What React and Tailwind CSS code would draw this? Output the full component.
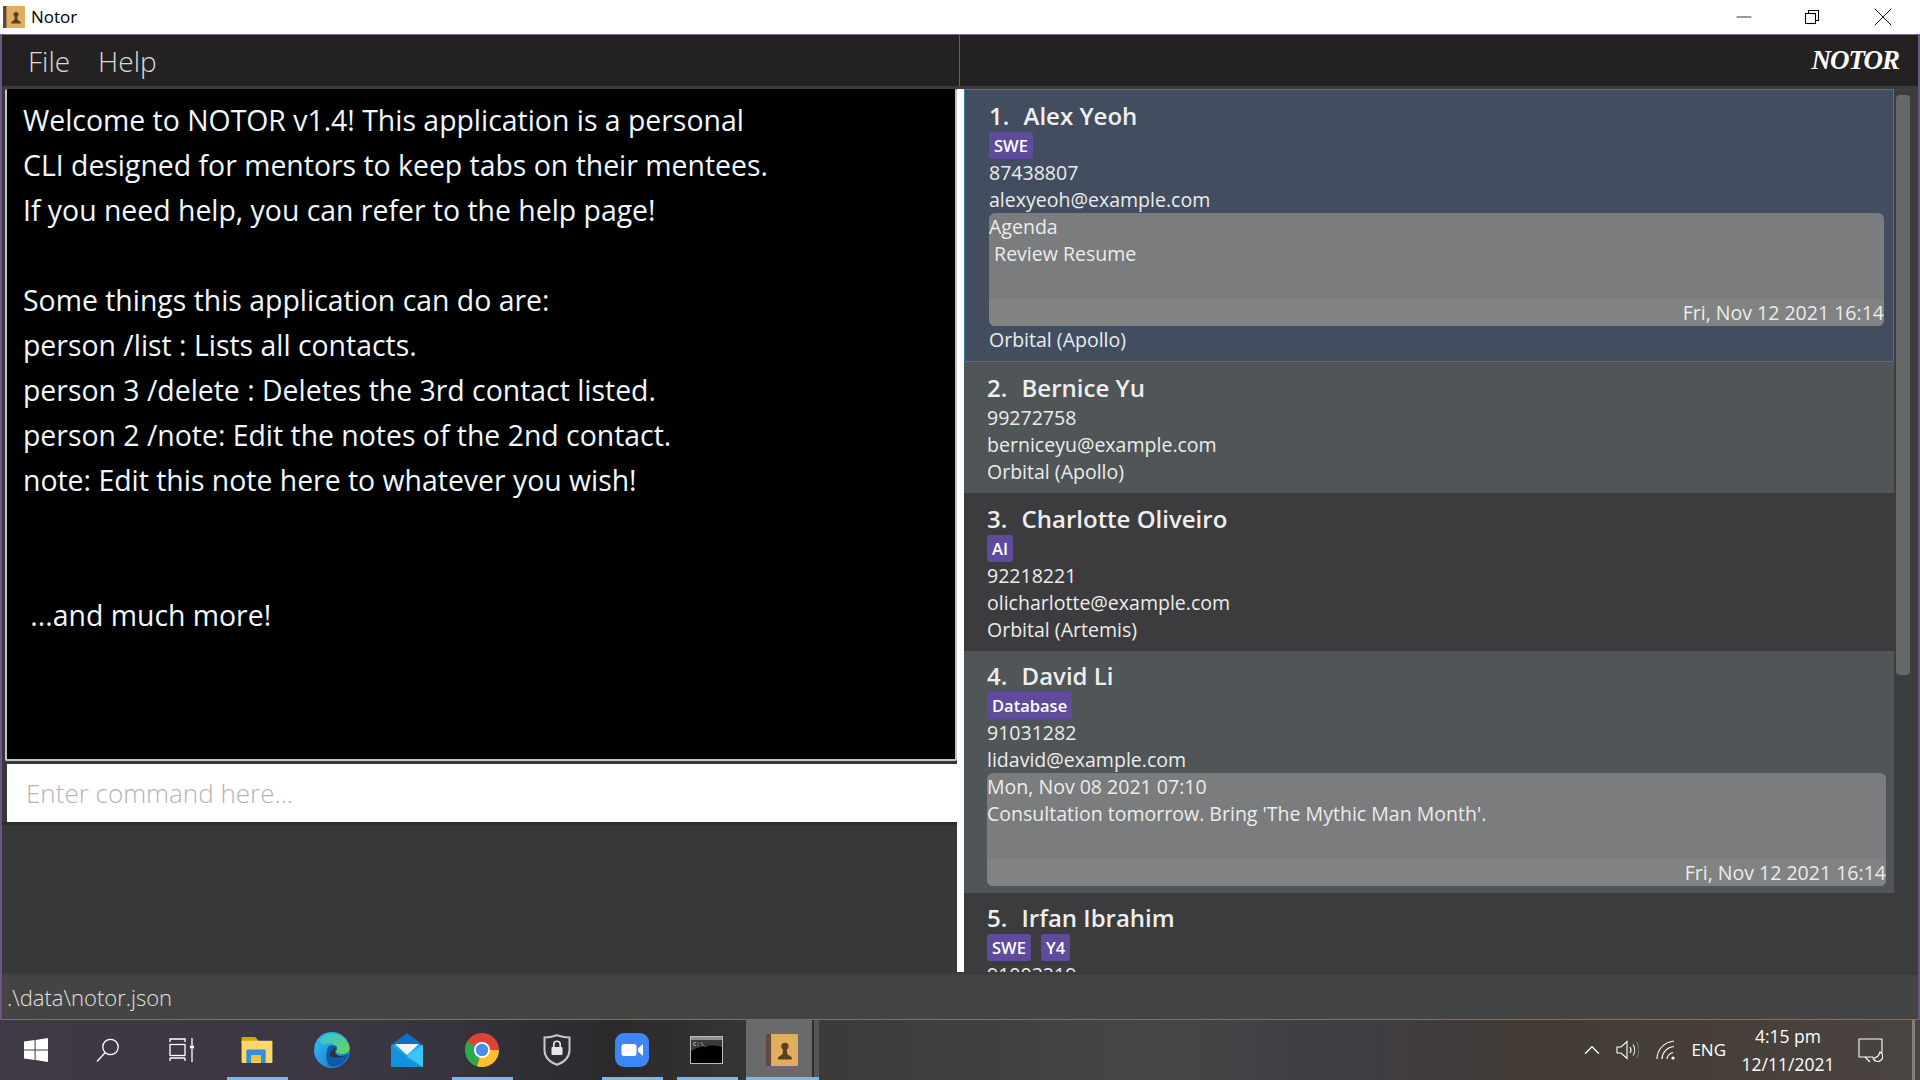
import React from "react";
import { Minus, X, ChevronUp } from "lucide-react";

const FONT = "font-['Open_Sans',sans-serif]";

// ─── Data ─────────────────────────────────────────────────────────────────────
const welcomeLines = [
  "Welcome to NOTOR v1.4! This application is a personal",
  "CLI designed for mentors to keep tabs on their mentees.",
  "If you need help, you can refer to the help page!",
  "\u00a0",
  "Some things this application can do are:",
  "person /list : Lists all contacts.",
  "person 3 /delete : Deletes the 3rd contact listed.",
  "person 2 /note: Edit the notes of the 2nd contact.",
  "note: Edit this note here to whatever you wish!",
  "\u00a0",
  "\u00a0",
  "\u00a0...and much more!",
];

// ─── Small pieces ─────────────────────────────────────────────────────────────
const Tag = ({ children }) => (
  <span className="flex h-[27px] items-center rounded-[3px] bg-[#5f4a9c] px-[5px] pt-[1px] text-[16.5px] font-semibold text-white">
    {children}
  </span>
);

const Name = ({ num, children }) => (
  <div className="h-[27px] whitespace-pre text-[24px] font-semibold leading-[25px] text-[#eeeeee]">
    {num}.&nbsp;<span className="ml-[8px]">{children}</span>
  </div>
);

const Row = ({ children }) => (
  <div className="h-[27px] whitespace-pre text-[19.55px] leading-[27px] text-[#ececec]">{children}</div>
);

const NoteBox = ({ title, body }) => (
  <div className="flex h-[113px] flex-col overflow-hidden rounded-[6px] bg-[#7b7c7d]">
    <div className="h-[86px]">
      <Row>{title}</Row>
      <Row>{body}</Row>
    </div>
    <div className="flex h-[27px] justify-end bg-[#818282]">
      <Row>Fri, Nov 12 2021 16:14</Row>
    </div>
  </div>
);

const NotorBook = ({ size = 22 }) => (
  <svg width={size} height={size} viewBox="0 0 22 22">
    <rect x="0" y="0" width="22" height="22" rx="1" fill="#e2ad5f" />
    <rect x="0" y="0" width="3.5" height="22" fill="#5e4a3e" />
    <circle cx="13" cy="8.5" r="2.5" fill="#5a3f20" />
    <path d="M11.8 10.5h2.4l.5 3.5 3 2v1.5H8.300V16l3-2z" fill="#5a3f20" />
  </svg>
);

// ─── Taskbar icons ────────────────────────────────────────────────────────────
const WindowsIcon = () => (
  <svg width="24" height="24" viewBox="0 0 24 24" fill="#fff">
    <path d="M0 3.6 10.6 2v9.5H0zM11.6 1.9 24 0v11.5H11.6zM0 12.5h10.6V22L0 20.4zM11.6 12.5H24V24l-12.4-1.9z" />
  </svg>
);

const SearchIcon = () => (
  <svg width="24" height="24" viewBox="0 0 24 24" fill="none" stroke="#fff" strokeWidth="1.3">
    <circle cx="14.5" cy="9" r="7.7" />
    <path d="M9.2 14.5 1 23.5" />
  </svg>
);

const TaskViewIcon = () => (
  <svg width="26" height="24" viewBox="0 0 26 24" fill="none" stroke="#fff" strokeWidth="1.3">
    <path d="M1 4V1h15v3M1 20v3M16 20v3M1 20h15" />
    <rect x="1" y="6.5" width="15" height="11" />
    <path d="M23 0v7M23 11v13" />
    <rect x="21" y="7.5" width="4" height="3" fill="#fff" stroke="none" />
  </svg>
);

const ExplorerIcon = () => (
  <svg width="32" height="26" viewBox="0 0 32 27">
    <path d="M0 1a1 1 0 0 1 1-1h13l3 3v4H0z" fill="#dda00b" />
    <path d="M0 4h31a1 1 0 0 1 1 1v21a1 1 0 0 1-1 1H1a1 1 0 0 1-1-1z" fill="#fcd86c" />
    <path d="M5 27V14a1 1 0 0 1 1-1h18a1 1 0 0 1 1 1v13h-5v-8H10v8z" fill="#2f8fd8" />
    <rect x="10" y="19" width="10" height="7" fill="#f5c242" />
  </svg>
);

const EdgeIcon = () => (
  <svg width="36" height="36" viewBox="0 0 36 36">
    <defs>
      <linearGradient id="edgeA" x1="0" y1="0" x2="1" y2="1">
        <stop offset="0" stopColor="#35c1f1" />
        <stop offset="1" stopColor="#1170c4" />
      </linearGradient>
      <linearGradient id="edgeB" x1="0" y1="0" x2="1" y2="1">
        <stop offset="0" stopColor="#35c1e8" />
        <stop offset="1" stopColor="#6ad84a" />
      </linearGradient>
    </defs>
    <circle cx="18" cy="18" r="18" fill="url(#edgeA)" />
    <path d="M6 8C11 0 28-3 35 13c2 6-2 9-7 9-4 0-6-1-6-4 1-5-5-8-10-6-3 1-5 0-6-4z" fill="url(#edgeB)" />
    <path d="M13 19c0-5 5-7 9-5 2 2 1 4 0 5-2 2 0 5 5 5 3 0 5-1 7-3-1 9-9 15-18 13-3-3-5-9-3-15z" fill="#0f5aa8" />
    <path d="M16 24c0-4 2-7 6-8-1 2-2 3 0 6 2 3 7 3 10 1-3 2-8 4-16 1z" fill="#2f2f33" />
  </svg>
);

const MailIcon = () => (
  <svg width="32" height="34" viewBox="0 0 32 34">
    <path d="M16 0 32 12v22H0V12z" fill="#0f6fc4" />
    <path d="M0 12h32v20H0z" fill="#1aa7ea" />
    <path d="M4 11h24l-12 11z" fill="#f2f2f2" />
    <path d="M32 12v22H20l-4-12z" fill="#39c6f3" />
    <path d="M0 34V12l16 12L32 34z" fill="#1590dd" />
  </svg>
);

const ChromeIcon = () => (
  <svg width="34" height="34" viewBox="0 0 34 34">
    <circle cx="17" cy="17" r="17" fill="#db4437" />
    <path d="M17 17 2.3 8.5A17 17 0 0 0 12 33.3z" fill="#2ea84f" />
    <path d="M17 17h17A17 17 0 0 1 12 33.3z" fill="#fbc02d" />
    <circle cx="17" cy="17" r="8" fill="#fff" />
    <circle cx="17" cy="17" r="6.2" fill="#4a8cf0" />
  </svg>
);

const ShieldIcon = () => (
  <svg width="28" height="32" viewBox="0 0 28 32">
    <path d="M1.5 3.5C6 3.5 10 2.5 14 1.2c4 1.3 8 2.3 12.5 2.3V16c0 7-5 12-12.5 14.8C6.5 28 1.5 23 1.5 16z" fill="none" stroke="#c9c9c9" strokeWidth="2" />
    <rect x="8.5" y="13" width="11" height="8" rx="1" fill="#e6e6e6" />
    <path d="M10.8 13v-2.5a3.2 3.2 0 0 1 6.4 0V13" fill="none" stroke="#e6e6e6" strokeWidth="1.6" />
  </svg>
);

const ZoomIcon = () => (
  <svg width="34" height="34" viewBox="0 0 34 34">
    <rect width="34" height="34" rx="9" fill="#3f86f5" />
    <rect x="6.5" y="11" width="15" height="12" rx="2.5" fill="#fff" />
    <path d="M23 15.5 28 11v12l-5-4.5z" fill="#fff" />
  </svg>
);

const CmdIcon = () => (
  <svg width="33" height="28" viewBox="0 0 33 28">
    <rect x="0.5" y="0.5" width="32" height="27" fill="#000" stroke="#b8bcc0" />
    <rect x="1" y="1" width="31" height="3" fill="#8d9094" />
    <path d="M1 4h31v7C20 8 10 10 1 15z" fill="#3a3a3a" />
    <text x="3" y="10" fontSize="6" fill="#e0e0e0" fontFamily="Liberation Mono, monospace">C:\_</text>
  </svg>
);

const SpeakerIcon = () => (
  <svg width="23" height="20" viewBox="0 0 23 20" fill="none" stroke="#fff" strokeWidth="1.1">
    <path d="M1 7h4l6-5.5v17L5 13H1z" />
    <path d="M14 7c1.2 1.8 1.2 4.2 0 6" />
    <path d="M17 4.5c2.2 3.2 2.2 7.8 0 11" />
    <path d="M20.5 2c3 4.8 3 11.2 0 16" stroke="#777" />
  </svg>
);

const WifiIcon = () => (
  <svg width="20" height="20" viewBox="0 0 20 20" fill="none" stroke="#fff" strokeWidth="1.1">
    <path d="M1 19C1 10 8 2 18 1" />
    <path d="M6 19c0-6 5-12 12-12.5" />
    <path d="M11 19c0-3 3-6 6-6.5" />
    <circle cx="17" cy="18" r="1.6" fill="#fff" stroke="none" />
  </svg>
);

const NotifyIcon = () => (
  <svg width="25" height="25" viewBox="0 0 25 25" fill="none" stroke="#fff" strokeWidth="1.1">
    <path d="M15 19H1V1h23v14" />
    <path d="M7 19l5 5" />
    <path d="M22 14a5 5 0 1 1-7 6c3 0 6-2 7-6z" />
  </svg>
);

// Taskbar button: bottom bar shows the apps that are running
const TaskButton = ({ running, width = "w-[75px]", children }) => (
  <div className={`relative flex h-full ${width} shrink-0 items-center justify-center`}>
    {children}
    {running && <div className="absolute bottom-0 left-[8px] right-[6px] h-[3px] bg-[#76b9ed]" />}
  </div>
);

// ─── Main page ────────────────────────────────────────────────────────────────
export default function App() {
  return (
    <div className={`flex h-[1080px] w-[1920px] flex-col overflow-hidden bg-[#444444] ${FONT}`}>
      {/* ── Title bar ── */}
      <div className="flex h-[34px] shrink-0 items-center bg-white">
        <div className="ml-[3px]">
          <NotorBook size={22} />
        </div>
        <span className="ml-[6px] text-[17px] text-black">Notor</span>
        <div className="ml-auto flex items-center text-black">
          <div className="flex w-[68px] justify-center">
            <Minus size={24} strokeWidth={0.8} />
          </div>
          <div className="mr-[2px] flex w-[68px] justify-center">
            <svg width="16" height="16" viewBox="0 0 16 16" fill="none" stroke="#000" strokeWidth="1.1">
              <rect x="1.5" y="4.5" width="10" height="10" />
              <path d="M4.5 4.5v-3h10v10h-3" />
            </svg>
          </div>
          <div className="mr-[2px] flex w-[70px] justify-center">
            <X size={32} strokeWidth={0.7} />
          </div>
        </div>
      </div>

      {/* ── App window ── */}
      <div className="flex h-[986px] shrink-0 flex-col border-x-2 border-b border-t border-x-[#6d5587] border-y-[#7d6a92] bg-[#3c3c3e]">
        {/* ── Menu bar ── */}
        <div className="flex h-[51px] shrink-0 bg-[#232122]">
          <div className="flex w-[958px] items-center gap-[28px] border-r border-r-[#6d5587] pl-[26px] text-[28px] font-light text-[#dcdcdc]">
            <span>File</span>
            <span>Help</span>
          </div>
          <div className="flex flex-1 items-center justify-end pr-[19px]">
            <span className="font-['Liberation_Serif',serif] text-[27px] font-bold italic tracking-[-1px] text-white">
              NOTOR
            </span>
          </div>
        </div>

        {/* ── Body ── */}
        <div className="mt-[3px] flex h-[883px] shrink-0">
          {/* ── Left column ── */}
          <div className="flex w-[955px] shrink-0 flex-col bg-[#383838]">
            <div className="ml-[3px] h-[672px] shrink-0 rounded-[2px] border-x-2 border-b-2 border-[#c4c4c4] bg-black pl-[16px] pt-[9px] text-[28.4px] leading-[45px] text-[#f0f8ff]">
              {welcomeLines.map((line, i) => (
                <div key={i} className="whitespace-pre">{line}</div>
              ))}
            </div>
            <div className="ml-[5px] mt-[3px] flex h-[58px] shrink-0 items-center bg-white pl-[19px] text-[26px] font-light text-[#b4b4b4]">
              Enter command here...
            </div>
            <div className="h-[3px] shrink-0 bg-[#2e2e2e]" />
          </div>

          {/* ── Divider ── */}
          <div className="w-[7px] shrink-0 bg-white" />

          {/* ── Person list ── */}
          <div className="h-full w-[930px] shrink-0 overflow-hidden">
            {/* 1 — selected */}
            <div className="h-[273px] border border-[#3a7d92] bg-[#424e5f] pl-[24px] pr-[9px] pt-[13px]">
              <Name num={1}>Alex Yeoh</Name>
              <div className="mt-[2px] flex gap-[10px]">
                <Tag>SWE</Tag>
              </div>
              <Row>87438807</Row>
              <Row>alexyeoh@example.com</Row>
              <NoteBox title="Agenda" body=" Review Resume" />
              <Row>Orbital (Apollo)</Row>
            </div>
            {/* 2 */}
            <div className="h-[131px] bg-[#505557] pl-[23px] pr-[8px] pt-[13px]">
              <Name num={2}>Bernice Yu</Name>
              <div className="mt-[2px]">
                <Row>99272758</Row>
                <Row>berniceyu@example.com</Row>
                <Row>Orbital (Apollo)</Row>
              </div>
            </div>
            {/* 3 */}
            <div className="h-[158px] bg-[#3c3c3e] pl-[23px] pr-[8px] pt-[13px]">
              <Name num={3}>Charlotte Oliveiro</Name>
              <div className="mt-[2px] flex gap-[10px]">
                <Tag>AI</Tag>
              </div>
              <Row>92218221</Row>
              <Row>olicharlotte@example.com</Row>
              <Row>Orbital (Artemis)</Row>
            </div>
            {/* 4 */}
            <div className="h-[242px] bg-[#505557] pl-[23px] pr-[8px] pt-[12px]">
              <Name num={4}>David Li</Name>
              <div className="mt-[2px] flex gap-[10px]">
                <Tag>Database</Tag>
              </div>
              <Row>91031282</Row>
              <Row>lidavid@example.com</Row>
              <NoteBox title="Mon, Nov 08 2021 07:10" body="Consultation tomorrow. Bring 'The Mythic Man Month'." />
            </div>
            {/* 5 — clipped by the panel */}
            <div className="h-[79px] overflow-hidden bg-[#3c3c3e] pl-[23px] pr-[8px] pt-[12px]">
              <Name num={5}>Irfan Ibrahim</Name>
              <div className="mt-[2px] flex gap-[10px]">
                <Tag>SWE</Tag>
                <Tag>Y4</Tag>
              </div>
              <Row>91003219</Row>
            </div>
          </div>

          {/* ── Scrollbar ── */}
          <div className="flex-1 bg-[#3d3d3f] px-[2px] pt-[6px]">
            <div className="h-[580px] w-[14px] rounded-[4px] bg-[#676767]" />
          </div>
        </div>

        {/* ── Status bar ── */}
        <div className="mt-[3px] flex flex-1 items-center bg-[#444444] pl-[5px] text-[22px] font-light text-[#e0e0e0]">
          .\data\notor.json
        </div>
      </div>

      {/* ── Taskbar ── */}
      <div className="flex h-[60px] shrink-0 items-center bg-[linear-gradient(90deg,#3e3945_0%,#3b3742_20%,#2a2a2c_32%,#3a3a3a_42%,#464646_60%,#3f3d44_70%,#423b34_80%,#473f39_90%,#4a4442_100%)] text-white">
        <TaskButton width="w-[72px]"><WindowsIcon /></TaskButton>
        <TaskButton width="w-[72px]"><SearchIcon /></TaskButton>
        <TaskButton><TaskViewIcon /></TaskButton>
        <TaskButton running><ExplorerIcon /></TaskButton>
        <TaskButton><EdgeIcon /></TaskButton>
        <TaskButton><MailIcon /></TaskButton>
        <TaskButton running><ChromeIcon /></TaskButton>
        <TaskButton><ShieldIcon /></TaskButton>
        <TaskButton running><ZoomIcon /></TaskButton>
        <TaskButton running><CmdIcon /></TaskButton>

        {/* ── Active app (Notor) with its stacked-window edge ── */}
        <div className="relative ml-[2px] flex h-full w-[73px] shrink-0 items-center justify-center bg-[linear-gradient(90deg,#6a6a6a_0%,#6a6a6a_90%,#2f2f2f_90%,#2f2f2f_93%,#555555_93%,#555555_100%)] pr-[2px]">
          <NotorBook size={32} />
          <div className="absolute bottom-0 left-0 right-0 h-[3px] bg-[#76b9ed]" />
        </div>

        {/* ── System tray ── */}
        <div className="ml-auto flex h-full items-center">
          <ChevronUp size={26} strokeWidth={1.2} />
          <div className="ml-[11px]"><SpeakerIcon /></div>
          <div className="ml-[17px]"><WifiIcon /></div>
          <span className="ml-[15px] text-[17px]">ENG</span>
          <div className="ml-[16px] flex w-[92px] flex-col items-center text-[17.5px] leading-[28px]">
            <span>4:15 pm</span>
            <span>12/11/2021</span>
          </div>
          <div className="ml-[24px]"><NotifyIcon /></div>
          <div className="ml-[29px] mr-[5px] h-full w-[3px] bg-[#85807a]" />
        </div>
      </div>
    </div>
  );
}
